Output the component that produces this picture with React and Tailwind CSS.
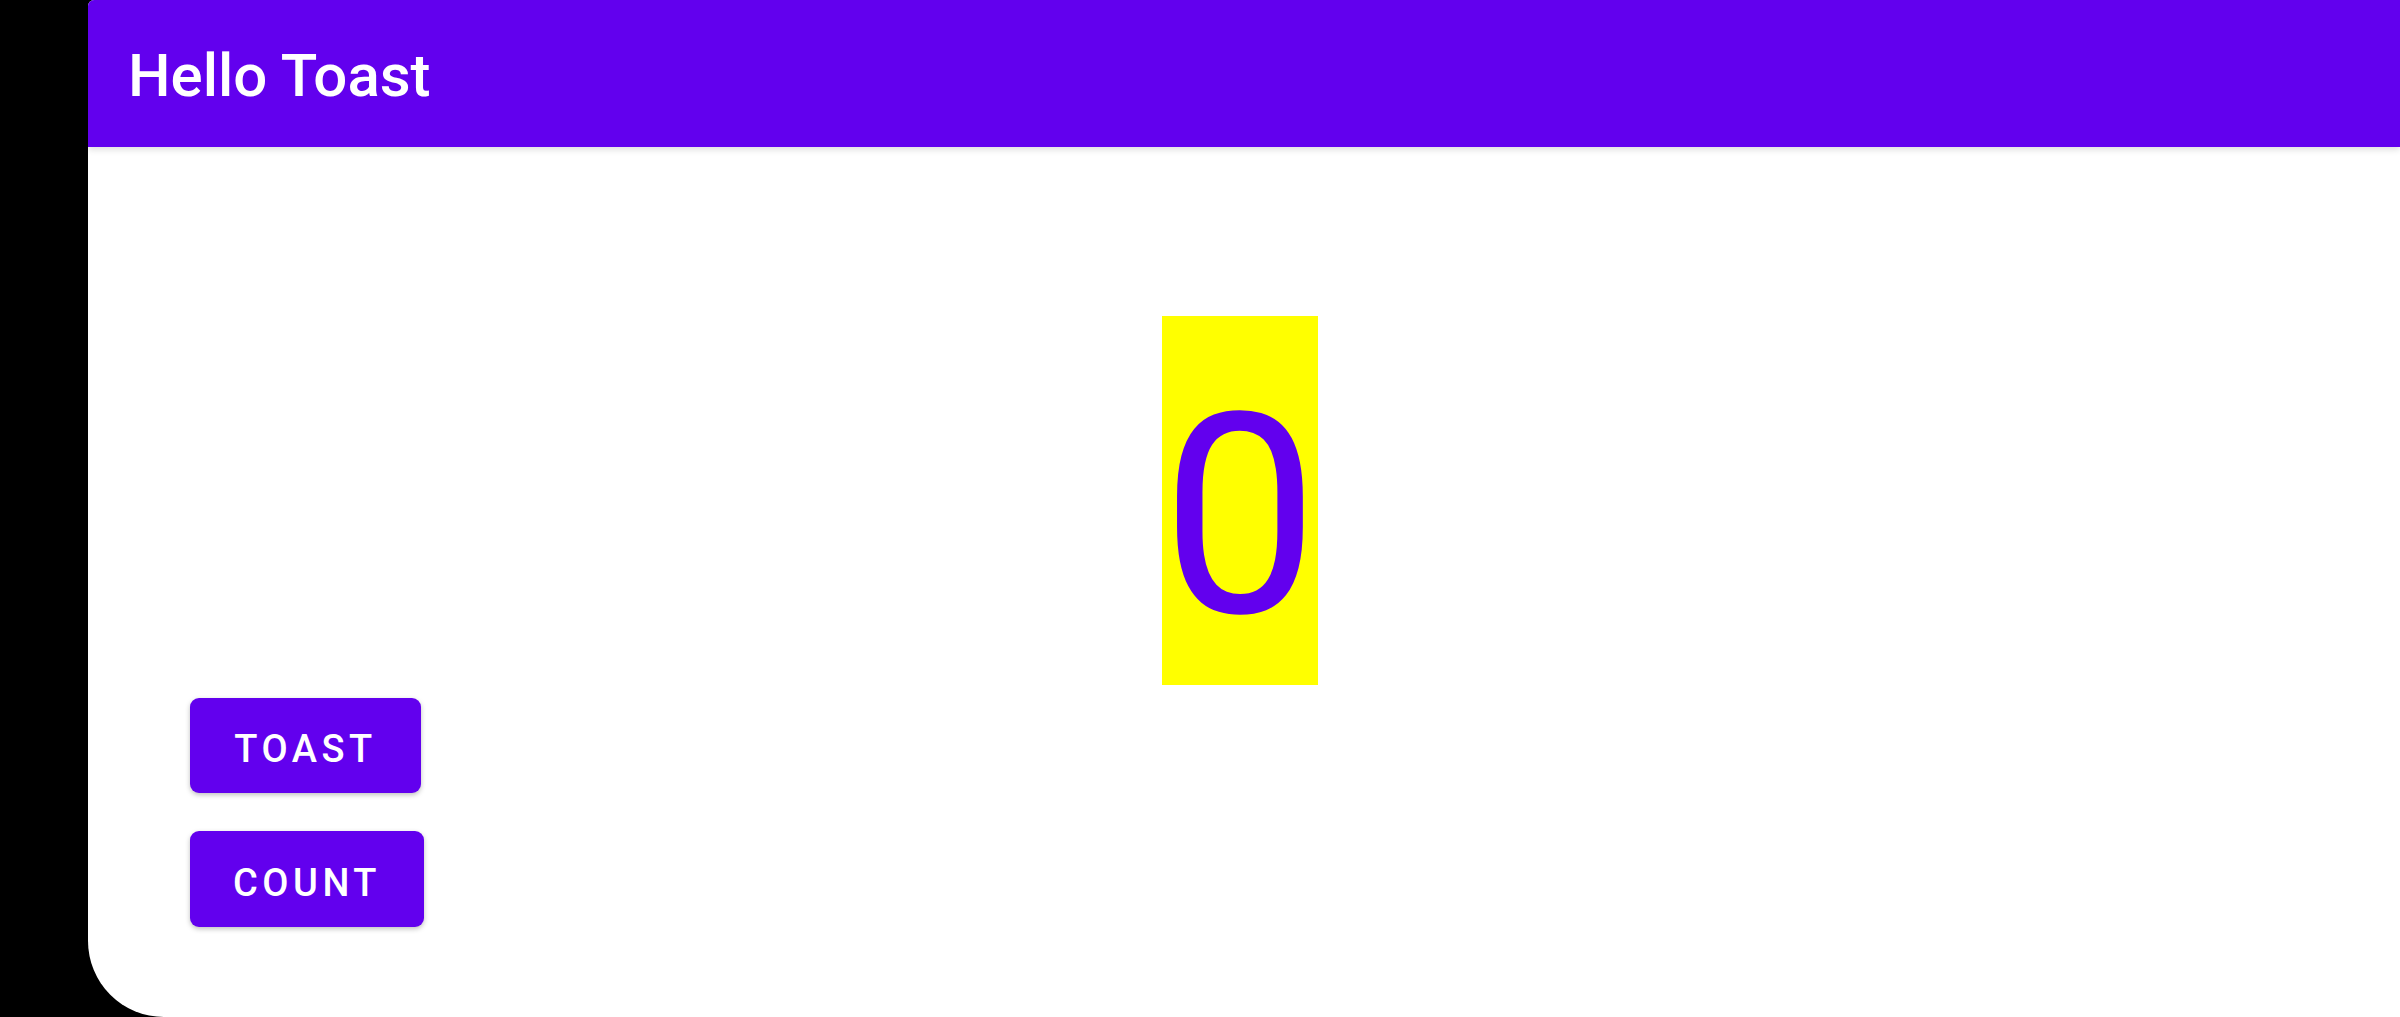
export default function App() {
  return (
    <div className="flex h-[1017px] w-[2400px] bg-black font-['Roboto',sans-serif]">
      <div className="w-[88px] shrink-0 bg-black" />
      <div className="flex flex-1 flex-col overflow-hidden rounded-bl-[76px] rounded-tl-[6px] bg-white">
        <header className="flex h-[147px] shrink-0 items-center bg-[#6200ee] shadow-[0_3px_6px_rgba(0,0,0,0.12)]">
          <h1 className="ml-[40px] mt-[5px] text-[60px] font-medium leading-none text-white">Hello Toast</h1>
        </header>
        <div className="flex flex-1 flex-col">
          <div className="mt-[169px] flex justify-center pr-[8px]">
            <div className="flex h-[369px] w-[156px] items-center justify-center bg-[#ffff00] pt-[30px] text-[280px] leading-none text-[#6200ee]">
              0
            </div>
          </div>
          <div className="ml-[102px] mt-[13px] flex flex-col items-start gap-[38px]">
            <button className="flex h-[95px] w-[231px] items-center justify-center rounded-[9px] bg-[#6200ee] pt-[8px] text-[38px] font-medium tracking-[4.5px] text-white shadow-[0_2px_5px_rgba(0,0,0,0.25)]">
              TOAST
            </button>
            <button className="flex h-[96px] w-[234px] items-center justify-center rounded-[9px] bg-[#6200ee] pt-[8px] text-[38px] font-medium tracking-[4.5px] text-white shadow-[0_2px_5px_rgba(0,0,0,0.25)]">
              COUNT
            </button>
          </div>
        </div>
      </div>
    </div>
  );
}
